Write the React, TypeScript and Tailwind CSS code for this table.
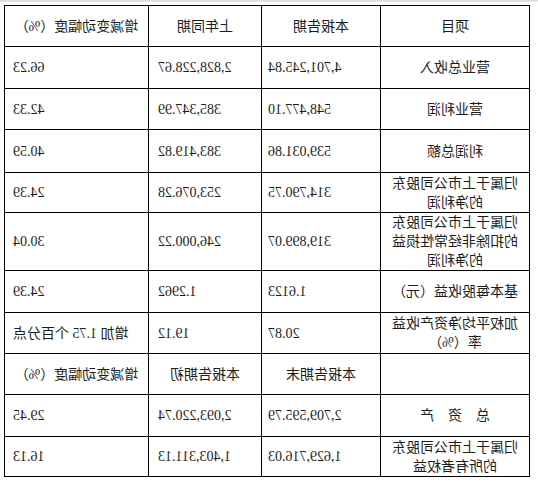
import React from 'react';

type Row = {
    h: string;
    item: string;
    cur: string;
    prev: string;
    change: string;
    head?: boolean;
};

const rows: Row[] = [
    { h: 'h-[41px]', item: '项目', cur: '本报告期', prev: '上年同期', change: '增减变动幅度（%）', head: true },
    { h: 'h-[42px]', item: '营业总收入', cur: '4,701,245.84', prev: '2,828,228.67', change: '66.23' },
    { h: 'h-[41px]', item: '营业利润', cur: '548,477.10', prev: '385,347.99', change: '42.33' },
    { h: 'h-[43px]', item: '利润总额', cur: '539,031.86', prev: '383,419.82', change: '40.59' },
    { h: 'h-[40px]', item: '归属于上市公司股东的净利润', cur: '314,790.75', prev: '253,076.28', change: '24.39' },
    { h: 'h-[58px]', item: '归属于上市公司股东的扣除非经常性损益的净利润', cur: '319,899.07', prev: '246,000.22', change: '30.04' },
    { h: 'h-[42px]', item: '基本每股收益（元）', cur: '1.6123', prev: '1.2962', change: '24.39' },
    { h: 'h-[41px]', item: '加权平均净资产收益率（%）', cur: '20.87', prev: '19.12', change: '增加 1.75 个百分点' },
    { h: 'h-[41px]', item: '', cur: '本报告期末', prev: '本报告期初', change: '增减变动幅度（%）', head: true },
    { h: 'h-[42px]', item: '总　资　产', cur: '2,709,595.79', prev: '2,093,220.74', change: '29.45' },
    { h: 'h-[40px]', item: '归属于上市公司股东的所有者权益', cur: '1,629,716.03', prev: '1,403,311.13', change: '16.13' },
];

const cell = 'border border-black p-0 align-middle';

export default function App() {
    return (
        <div className="w-[538px] h-[483px] bg-white overflow-hidden -scale-x-100">
            <div className="h-[2px] bg-gradient-to-b from-[#d6d6d6] to-[#efefef]" />
            <table
                className="mt-[3px] ml-[8px] w-[525px] table-fixed border-collapse text-[14px] leading-[19px] text-[#1c1c1c]"
                style={{ fontFamily: '"Liberation Serif", "Noto Sans CJK SC", serif' }}
            >
                <colgroup>
                    <col className="w-[149px]" />
                    <col className="w-[119px]" />
                    <col className="w-[113px]" />
                    <col className="w-[144px]" />
                </colgroup>
                <tbody>
                    {rows.map((r, i) => (
                        <tr key={i} className={r.h}>
                            <td className={`${cell} px-[8px] text-center`}>{r.item}</td>
                            {r.head ? (
                                <>
                                    <td className={`${cell} text-center whitespace-nowrap`}>{r.cur}</td>
                                    <td className={`${cell} text-center whitespace-nowrap`}>{r.prev}</td>
                                    <td className={`${cell} text-center whitespace-nowrap`}>{r.change}</td>
                                </>
                            ) : (
                                <>
                                    <td className={`${cell} pr-[6px] text-right whitespace-nowrap`}>{r.cur}</td>
                                    <td className={`${cell} pr-[9px] text-right whitespace-nowrap`}>{r.prev}</td>
                                    <td className={`${cell} pr-[8px] text-right whitespace-nowrap`}>{r.change}</td>
                                </>
                            )}
                        </tr>
                    ))}
                </tbody>
            </table>
        </div>
    );
}
